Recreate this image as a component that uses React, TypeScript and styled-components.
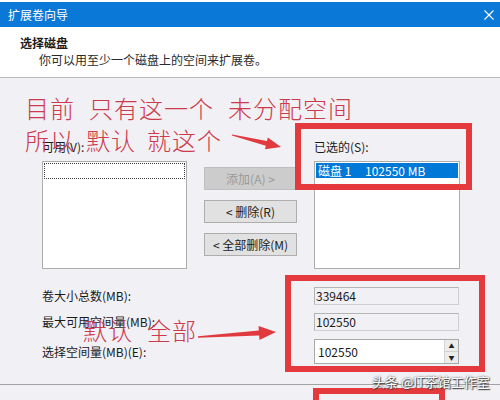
import styled, { createGlobalStyle } from 'styled-components';

const GlobalStyle = createGlobalStyle`
  html, body {
    margin: 0;
    padding: 0;
    background: #f1f0f4;
  }
`;

interface IFrameProps {
  $x: number;
  $y: number;
  $w: number;
  $h: number;
}

export default function App() {
  return (
    <Window>
      <GlobalStyle />
      <TopStrip />
      <TitleBar>
        <span>扩展卷向导</span>
        <svg width="10" height="10" viewBox="0 0 10 10">
          <path d="M0.5 0.5 L9.5 9.5 M9.5 0.5 L0.5 9.5" stroke="#fff" strokeWidth="1.1" />
        </svg>
      </TitleBar>
      <Header>
        <HeaderTitle>选择磁盘</HeaderTitle>
        <HeaderSub>你可以用至少一个磁盘上的空间来扩展卷。</HeaderSub>
      </Header>

      <Body>
        <ListsRow>
          <ListColumn>
            <Label>可用(V):</Label>
            <ListBox>
              <FocusRow />
            </ListBox>
          </ListColumn>

          <ButtonColumn>
            <Button $disabled>添加(A) &gt;</Button>
            <Button>&lt; 删除(R)</Button>
            <Button>&lt; 全部删除(M)</Button>
          </ButtonColumn>

          <ListColumn>
            <Label>已选的(S):</Label>
            <ListBox>
              <SelectedRow>
                <DiskName>磁盘 1</DiskName>
                <span>102550 MB</span>
              </SelectedRow>
            </ListBox>
          </ListColumn>
        </ListsRow>

        <FieldsGrid>
          <Label>卷大小总数(MB):</Label>
          <Field>339464</Field>
          <Label>最大可用空间量(MB):</Label>
          <Field>102550</Field>
          <Label>选择空间量(MB)(E):</Label>
          <SpinField>
            <SpinValue>102550</SpinValue>
            <Spinner>
              <SpinButton>▲</SpinButton>
              <SpinButton>▼</SpinButton>
            </Spinner>
          </SpinField>
        </FieldsGrid>
      </Body>
      <Footer />

      {/* red markup drawn on top of the dialog */}
      <Note $x={25} $y={92}>
        <NoteLine>
          <span>目前</span>
          <span>只有这一个</span>
          <span>未分配空间</span>
        </NoteLine>
        <NoteLine $gap={11}>
          <span>所以</span>
          <span>默认</span>
          <span>就这个</span>
        </NoteLine>
      </Note>
      <Note $x={83} $y={314}>
        <NoteLine>
          <span>默认</span>
          <span>全部</span>
        </NoteLine>
      </Note>

      <Frame $x={295} $y={123} $w={177} $h={67} />
      <Frame $x={285} $y={275} $w={200} $h={97} />
      <Frame $x={313} $y={388} $w={132} $h={24} />

      <Arrows width="500" height="400" viewBox="0 0 500 400">
        <path d="M232.1,134.5 L267,141 L267.8,137.6 L281,147 L265,149.2 L265.8,145.8 L231.9,135.5 Z" />
        <path d="M198,336.3 L258.8,330.6 L258.6,326.1 L276,332 L259.4,340.1 L259.2,335.6 L198,337.7 Z" />
      </Arrows>

      <Watermark>头条 @IT茶馆工作室</Watermark>
    </Window>
  );
}

const Window = styled.div`
  position: relative;
  width: 500px;
  height: 400px;
  overflow: hidden;
  display: flex;
  flex-direction: column;
  background: #f1f0f4;
  font-family: 'Noto Sans CJK SC', 'Noto Sans', sans-serif;
  font-size: 12px;
  color: #1b1b1b;
`;

const TopStrip = styled.div`
  height: 2px;
  background: #fdfdfd;
`;

const TitleBar = styled.div`
  height: 25px;
  padding: 0 6px 0 8px;
  display: flex;
  align-items: center;
  justify-content: space-between;
  background: #0a78d6;
  color: #fff;
  font-size: 12px;
`;

const Header = styled.div`
  height: 42px;
  padding: 8px 0 0 20px;
  background: #fff;
  border-bottom: 1px solid #b9b9b9;
`;

const HeaderTitle = styled.div`
  font-weight: 700;
  line-height: 16px;
`;

const HeaderSub = styled.div`
  margin: 1px 0 0 19px;
  line-height: 16px;
  color: #2a2a2a;
`;

const Body = styled.div`
  height: 306px;
  box-sizing: border-box;
  padding: 62px 0 0 42px;
`;

const ListsRow = styled.div`
  display: grid;
  grid-template-columns: 145px 93px 146px;
  column-gap: 17px;
`;

const ListColumn = styled.div`
  display: flex;
  flex-direction: column;
  gap: 7px;
`;

const Label = styled.div`
  line-height: 14px;
  font-size: 12px;
  color: #1b1b1b;
`;

const ListBox = styled.div`
  height: 108px;
  box-sizing: border-box;
  padding: 1px;
  background: #fff;
  border: 1px solid #adadad;
`;

const FocusRow = styled.div`
  height: 14px;
  border: 1px dotted #3a3a3a;
`;

const SelectedRow = styled.div`
  height: 15px;
  padding-left: 2px;
  display: flex;
  align-items: center;
  background: #0078d7;
  color: #fff;
  line-height: 15px;
`;

const DiskName = styled.span`
  width: 47px;
`;

const ButtonColumn = styled.div`
  display: flex;
  flex-direction: column;
  gap: 10px;
  padding-top: 27px;
`;

const Button = styled.div<{ $disabled?: boolean }>`
  height: 23px;
  box-sizing: border-box;
  display: flex;
  align-items: center;
  justify-content: center;
  background: ${(p) => (p.$disabled ? '#cccccc' : '#e1e1e1')};
  border: 1px solid ${(p) => (p.$disabled ? '#bfbfbf' : '#adadad')};
  color: ${(p) => (p.$disabled ? '#9a9a9a' : '#1b1b1b')};
`;

const FieldsGrid = styled.div`
  margin-top: 18px;
  display: grid;
  grid-template-columns: 272px 145px;
  row-gap: 8px;
  align-items: center;
`;

const Field = styled.div`
  height: 18px;
  box-sizing: border-box;
  padding-left: 1px;
  border: 1px solid #cfcfcf;
  border-top-color: #b4b4b4;
  border-left-color: #b4b4b4;
  background: #f1f0f4;
  line-height: 16px;
  color: #1b1b1b;
`;

const SpinField = styled.div`
  height: 25px;
  box-sizing: border-box;
  display: flex;
  align-items: center;
  justify-content: space-between;
  background: #fff;
  border: 1px solid #a9a9a9;
`;

const SpinValue = styled.span`
  padding-left: 3px;
`;

const Spinner = styled.div`
  align-self: stretch;
  width: 13px;
  display: flex;
  flex-direction: column;
  border-left: 1px solid #d4d4d4;
`;

const SpinButton = styled.div`
  flex: 1;
  display: flex;
  align-items: center;
  justify-content: center;
  font-size: 6px;
  color: #222;
  background: #ececec;
  border-bottom: 1px solid #d0d0d0;

  &:last-child {
    border-bottom: none;
  }
`;

const Footer = styled.div`
  flex: 1;
  border-top: 1px solid #a3a3a3;
  background: #f1f0f4;
`;

const Note = styled.div<{ $x: number; $y: number }>`
  position: absolute;
  left: ${(p) => p.$x}px;
  top: ${(p) => p.$y}px;
  font-size: 24px;
  line-height: 32px;
  letter-spacing: 1px;
  font-weight: 300;
  color: #cc3a4c;
`;

const NoteLine = styled.div<{ $gap?: number }>`
  display: flex;
  gap: ${(p) => p.$gap ?? 14}px;
  white-space: nowrap;
`;

const Frame = styled.div<IFrameProps>`
  position: absolute;
  left: ${(p) => p.$x}px;
  top: ${(p) => p.$y}px;
  width: ${(p) => p.$w}px;
  height: ${(p) => p.$h}px;
  box-sizing: border-box;
  border: 6px solid #e53a3d;
`;

const Arrows = styled.svg`
  position: absolute;
  left: 0;
  top: 0;
  pointer-events: none;

  path {
    fill: #e03a3e;
  }
`;

const Watermark = styled.div`
  position: absolute;
  left: 372px;
  top: 373px;
  font-size: 13px;
  line-height: 18px;
  color: #fff;
  text-shadow: 0 0 2px #333, 1px 1px 1px #444;
  white-space: nowrap;
`;
